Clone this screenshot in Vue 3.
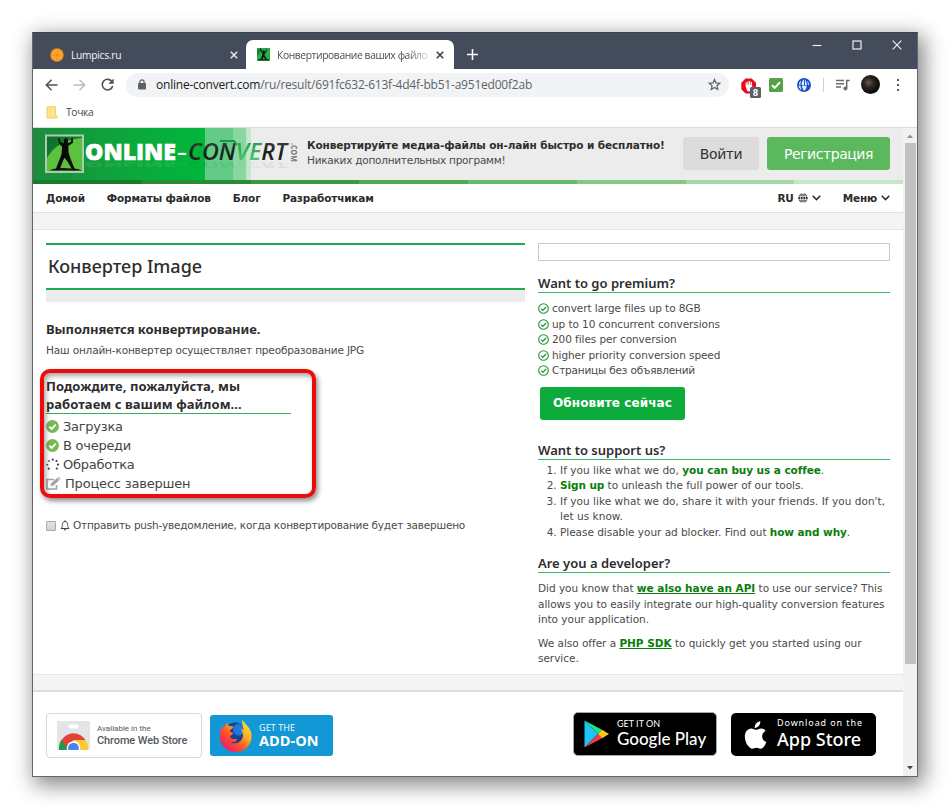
<script setup>
const navLinks = ['Домой', 'Форматы файлов', 'Блог', 'Разработчикам']

const stripColors = ['#1d7a2b', '#2b8a36', '#3b9a40', '#4fac51', '#67ba6a', '#84c787', '#a5d8a8', '#c5e7c8']

const perks = [
  { text: 'convert large files up to 8GB' },
  { text: 'up to 10 concurrent conversions' },
  { text: '200 files per conversion' },
  { text: 'higher priority conversion speed' },
  { text: 'Страницы без объявлений', ru: true }
]

const steps = [
  { label: 'Загрузка', state: 'done' },
  { label: 'В очереди', state: 'done' },
  { label: 'Обработка', state: 'busy' },
  { label: 'Процесс завершен', state: 'todo' }
]

// dots of the loading spinner
const dots = [
  { x: 7, y: 1.4, o: 1 },
  { x: 10.9, y: 2.8, o: 1 },
  { x: 12.4, y: 6.6, o: 1 },
  { x: 11.2, y: 10.6, o: 1 },
  { x: 2.8, y: 10.8, o: 0.9 },
  { x: 1.3, y: 6.8, o: 0.8 },
  { x: 3, y: 2.8, o: 0.7 }
]
</script>

<template>
  <div class="desktop">
    <div class="window">
      <!-- title bar with tabs -->
      <div class="titlebar">
        <div class="tab tab-idle">
          <svg class="fav" width="14" height="14" viewBox="0 0 14 14">
            <circle cx="7" cy="7" r="6.7" fill="#f7931e" />
            <circle cx="7" cy="7" r="5" fill="#fbab3c" />
            <path d="M7 2v10M2 7h10M3.5 3.5l7 7M10.5 3.5l-7 7" stroke="#f18a17" stroke-width=".9" />
          </svg>
          <span class="tab-title">Lumpics.ru</span>
          <svg width="8" height="8" viewBox="0 0 8 8"><path d="M.8.8l6.4 6.4M7.2.8L.8 7.2" stroke="#e6e8ec" stroke-width="1.5" /></svg>
        </div>
        <div class="tab tab-active">
          <svg class="fav" width="13" height="13" viewBox="0 0 38 38">
            <rect width="38" height="38" fill="#27b04a" />
            <path d="M0 26Q8 12 16 4H0z" fill="#148435" />
            <path d="M11 1l3 8 4 3c-1-3 0-6 2-6s3 3 2 6l4-3V2h2v9l-5 4-1 7 8 12h-4l-7-8-5 9h-5l6-12 1-8-5-5-3-8z" fill="#111" />
            <path d="M3 33h32v3H3z" fill="#111" />
          </svg>
          <span class="tab-title faded">Конвертирование ваших файло</span>
          <svg width="8" height="8" viewBox="0 0 8 8"><path d="M.8.8l6.4 6.4M7.2.8L.8 7.2" stroke="#3c4043" stroke-width="1.6" /></svg>
        </div>
        <svg class="new-tab" width="11" height="11" viewBox="0 0 11 11"><path d="M5.5 0v11M0 5.5h11" stroke="#fff" stroke-width="1.6" /></svg>
        <div class="win-buttons">
          <svg width="10" height="10" viewBox="0 0 10 10"><path d="M.5 5.5h9" stroke="#eef0f3" stroke-width="1.1" /></svg>
          <svg width="10" height="10" viewBox="0 0 10 10"><rect x="1" y="1" width="8" height="8" fill="none" stroke="#eef0f3" stroke-width="1.2" /></svg>
          <svg width="10" height="10" viewBox="0 0 10 10"><path d="M.7.7l8.6 8.6M9.3.7L.7 9.3" stroke="#eef0f3" stroke-width="1.2" /></svg>
        </div>
      </div>

      <!-- address bar -->
      <div class="toolbar">
        <svg class="nav-ic" width="13" height="12" viewBox="0 0 13 12"><path d="M12.5 6H1.4M6.6.8L1.3 6l5.3 5.2" fill="none" stroke="#4d5156" stroke-width="1.5" /></svg>
        <svg class="nav-ic" width="13" height="12" viewBox="0 0 13 12"><path d="M.5 6h11.1M6.4.8L11.7 6l-5.3 5.2" fill="none" stroke="#b9bbbe" stroke-width="1.5" /></svg>
        <svg class="nav-ic" width="13" height="13" viewBox="0 0 13 13">
          <path d="M11.2 4A5.3 5.3 0 1 0 11.7 8" fill="none" stroke="#4d5156" stroke-width="1.6" />
          <path d="M12.6.5v5.2H7.4z" fill="#4d5156" />
        </svg>
        <div class="omnibox">
          <svg width="8" height="11" viewBox="0 0 8 11">
            <rect x="0" y="4" width="8" height="6.6" rx=".8" fill="#5f6368" />
            <path d="M1.9 4.3V2.9a2.1 2.1 0 0 1 4.2 0v1.4" fill="none" stroke="#5f6368" stroke-width="1.2" />
          </svg>
          <span class="url"><b>online-convert.com</b>/ru/result/691fc632-613f-4d4f-bb51-a951ed00f2ab</span>
          <svg class="star" width="13" height="13" viewBox="0 0 24 24"><path d="M12 2.6l2.7 6.5 7 .6-5.3 4.6 1.6 6.9-6-3.7-6 3.7 1.6-6.9-5.3-4.6 7-.6z" fill="none" stroke="#5f6368" stroke-width="2.2" /></svg>
        </div>
        <div class="extensions">
          <svg width="20" height="20" viewBox="0 0 20 20">
            <path d="M4.5.5h6.2L15 4.8v6.4l-4.3 4.3H4.5L.3 11.2V4.8z" fill="#e3101c" />
            <path d="M4.6 8.5v-4h1.200V7h.5V3.400h1.200V7h.5V3h1.200v4h.5V4h1.200v5l1-.6.7.7-2.600 4.100H6.400z" fill="#fff" />
            <rect x="9" y="9" width="11" height="11" rx="1.5" fill="#5b5e62" />
            <text x="14.5" y="17.5" text-anchor="middle" class="ext-count">8</text>
          </svg>
          <svg width="14" height="14" viewBox="0 0 14 14">
            <rect width="14" height="14" rx="1.5" fill="#55a346" />
            <path d="M3 7.2l2.7 2.7L11 4.2" fill="none" stroke="#fff" stroke-width="2" />
          </svg>
          <svg width="14" height="14" viewBox="0 0 14 14">
            <circle cx="7" cy="7" r="7" fill="#1d4fc4" />
            <path d="M7 1.200C5.500 2.500 4.500 4.500 4.600 7H7.100zM8 1.500v5.500h1.900C9.700 4.500 9 2.600 8 1.500zM1.500 7.800c.2 1.700 1.400 3.400 2.900 4.200-.5-1.200-.8-2.500-.8-4.200zM4.900 7.800h4.800c-.1 2-1 3.900-2.400 5-1.300-1.100-2.200-3-2.400-5zM2 6.800c0-1.700.8-3.200 2.200-4.200-.6 1.400-.8 2.700-.8 4.200zM12.200 6.800c-.2-1.500-.9-2.900-2.100-3.900.5 1.200.8 2.400.8 3.900z" fill="#dff1ff" />
          </svg>
          <span class="sep"></span>
          <svg width="14" height="12" viewBox="0 0 14 12">
            <path d="M0 1.5h8M0 4.7h8M0 7.9h5" stroke="#6a6d72" stroke-width="1.5" />
            <path d="M10.7 9.3V1.4h3" fill="none" stroke="#6a6d72" stroke-width="1.5" />
            <circle cx="9.4" cy="9.4" r="2" fill="#6a6d72" />
          </svg>
          <span class="avatar"></span>
          <span class="kebab"><i></i><i></i><i></i></span>
        </div>
      </div>

      <div class="bookmarks">
        <svg width="12" height="13" viewBox="0 0 12 13">
          <path d="M1 .7h8.6v8.6l1.6 1V12H1z" fill="#fde48c" stroke="#eccb62" stroke-width=".9" />
        </svg>
        <span>Точка</span>
      </div>

      <!-- page and its scrollbar -->
      <div class="viewport">
        <div class="page">
          <header class="banner">
            <svg class="logo" width="270" height="52" viewBox="0 0 270 52">
              <defs>
                <linearGradient id="dark" x1="0" y1="0" x2="0" y2="1">
                  <stop offset="0" stop-color="#4a4f4b" />
                  <stop offset=".6" stop-color="#151c17" />
                  <stop offset="1" stop-color="#2b332d" />
                </linearGradient>
                <linearGradient id="leaf" x1="0" y1="0" x2="0" y2="1">
                  <stop offset="0" stop-color="#16913a" />
                  <stop offset="1" stop-color="#58cf7c" />
                </linearGradient>
                <linearGradient id="tile" x1="0" y1="0" x2="1" y2="1">
                  <stop offset="0" stop-color="#0f6d2b" />
                  <stop offset="1" stop-color="#158d35" />
                </linearGradient>
              </defs>
              <rect x="13" y="7.5" width="37" height="36.5" fill="url(#tile)" stroke="#a9ccb0" stroke-width="2" />
              <path d="M14 30Q24 12 49 10V43H14z" fill="#5cc23e" />
              <!-- figure with raised arms -->
              <path d="M25 10.500l1-.8 1.400 4.300 3.800 1.300c-.9-2.200-.2-5 1.800-5s2.700 2.600 1.700 4.900l3.300-1.500.4-3.800 1.300-.2.3 5-4.700 3.200.3 6.600 1.800 6 4 9.800 2.600 1.900h-4.500l-5-8.700-3-3.700-2 4.200-3 8.200h-4.200l3-7.500 3.200-8.400.600-7.500-2.900-3z" fill="#080a08" />
              <path d="M16 42.500l5-1.700 9-.8 15 1 4 1.500z" fill="#0c120c" />
              <g id="wordmark">
                <text x="52" y="32" class="l-online" textLength="91" lengthAdjust="spacingAndGlyphs">ONLINE</text>
                <text x="144" y="32" class="l-dash" textLength="10" lengthAdjust="spacingAndGlyphs">-</text>
                <text x="155" y="32" class="l-conv" textLength="99" lengthAdjust="spacingAndGlyphs" fill="url(#dark)">CON<tspan fill="url(#leaf)">VE</tspan>RT</text>
              </g>
              <path d="M187 13h14l3 4" fill="none" stroke="#119a3e" stroke-width="1.8" />
              <use href="#wordmark" opacity=".07" transform="matrix(1 0 0 -.35 0 45.5)" />
              <text transform="translate(257.500 15) rotate(90)" class="l-com" textLength="19" lengthAdjust="spacingAndGlyphs">.COM</text>
            </svg>
            <div class="slogan">
              <strong>Конвертируйте медиа-файлы он-лайн быстро и бесплатно!</strong>
              <span>Никаких дополнительных программ!</span>
            </div>
            <div class="auth">
              <a class="btn btn-login">Войти</a>
              <a class="btn btn-signup">Регистрация</a>
            </div>
          </header>
          <div class="strip">
            <i v-for="c in stripColors" :key="c" :style="{ background: c }"></i>
          </div>

          <nav class="menu">
            <a v-for="l in navLinks" :key="l">{{ l }}</a>
            <a class="lang">RU
              <svg width="10" height="10" viewBox="0 0 11 11">
                <circle cx="5.5" cy="5.5" r="5.2" fill="#2b2b2b" />
                <path d="M0 3.7h11M0 7.3h11M5.5 0v11" stroke="#fff" stroke-width=".8" />
                <ellipse cx="5.5" cy="5.5" rx="2.7" ry="5" fill="none" stroke="#fff" stroke-width=".8" />
              </svg>
              <svg width="9" height="6" viewBox="0 0 9 6"><path d="M.7.8l3.8 3.8L8.3.8" fill="none" stroke="#2b2b2b" stroke-width="1.5" /></svg>
            </a>
            <a class="more">Меню
              <svg width="9" height="6" viewBox="0 0 9 6"><path d="M.7.8l3.8 3.8L8.3.8" fill="none" stroke="#2b2b2b" stroke-width="1.5" /></svg>
            </a>
          </nav>
          <div class="band"></div>

          <main class="content">
            <section class="left">
              <h1>Конвертер Image</h1>
              <div class="bar"></div>
              <h2 class="converting">Выполняется конвертирование.</h2>
              <p class="info">Наш онлайн-конвертер осуществляет преобразование JPG</p>

              <div class="progress">
                <h2>Подождите, пожалуйста, мы<br />работаем с вашим файлом...</h2>
                <ul>
                  <li v-for="s in steps" :key="s.label" :class="s.state">
                    <svg v-if="s.state === 'done'" width="13" height="13" viewBox="0 0 13 13">
                      <circle cx="6.5" cy="6.5" r="6.5" fill="#79b956" />
                      <path d="M3.3 6.6l2.3 2.3 4.2-4.3" fill="none" stroke="#fff" stroke-width="1.8" />
                    </svg>
                    <svg v-else-if="s.state === 'busy'" width="13" height="13" viewBox="0 0 13.5 13">
                      <circle v-for="(d, i) in dots" :key="i" :cx="d.x" :cy="d.y" r="1.1" fill="#333" :opacity="d.o" />
                    </svg>
                    <svg v-else width="15" height="13" viewBox="0 0 15 13">
                      <path d="M8 2.5H1V12h9.500V8" fill="none" stroke="#a3a3a3" stroke-width="1.6" />
                      <path d="M4.500 9.300l.7-3L11 .9l2.400 2.200-5.800 5.500z" fill="#a3a3a3" />
                      <path d="M11.600.4l1-.4 2 1.900-.6.900z" fill="#a3a3a3" />
                    </svg>
                    <span>{{ s.label }}</span>
                  </li>
                </ul>
                <div class="highlight"></div>
              </div>

              <label class="push">
                <span class="check"></span>
                <svg width="10" height="11" viewBox="0 0 10 11">
                  <path d="M1 8.500C2.300 7.500 2.300 6 2.400 4.400 2.500 2.600 3.600 1.500 5 1.500s2.500 1.100 2.600 2.900C7.700 6 7.700 7.500 9 8.500z" fill="none" stroke="#444" stroke-width="1" />
                  <path d="M5 .3v1.2M4 9.2q1 1.500 2 0" fill="none" stroke="#444" stroke-width="1.1" />
                </svg>
                <span class="push-text">Отправить push-уведомление, когда конвертирование будет завершено</span>
              </label>
            </section>

            <aside class="right">
              <div class="ad"></div>
              <h3>Want to go premium?</h3>
              <ul class="perks">
                <li v-for="p in perks" :key="p.text" :class="{ ru: p.ru }">
                  <svg width="11" height="11" viewBox="0 0 11 11">
                    <circle cx="5.5" cy="5.5" r="4.8" fill="none" stroke="#1f9635" stroke-width="1.1" />
                    <path d="M3 5.6l1.8 1.8L8.1 4" fill="none" stroke="#1f9635" stroke-width="1.3" />
                  </svg>
                  <span>{{ p.text }}</span>
                </li>
              </ul>
              <a class="upgrade">Обновите сейчас</a>

              <h3>Want to support us?</h3>
              <ol>
                <li>If you like what we do, <a>you can buy us a coffee</a>.</li>
                <li class="tight"><a>Sign up</a> to unleash the full power of our tools.</li>
                <li>If you like what we do, share it with your friends. If you don't,<br />let us know.</li>
                <li class="tight">Please disable your ad blocker. Find out <a>how and why</a>.</li>
              </ol>

              <h3>Are you a developer?</h3>
              <p>Did you know that <a>we also have an API</a> to use our service? This<br />allows you to easily integrate our high-quality conversion features<br />into your application.</p>
              <p>We also offer a <a>PHP SDK</a> to quickly get you started using our<br />service.</p>
            </aside>
          </main>

          <div class="band band-bottom"></div>
          <footer class="stores">
            <a class="store chrome">
              <svg width="33" height="29" viewBox="0 0 33 29">
                <rect width="33" height="29" fill="#e3e4e5" />
                <rect x="11.5" y="3.5" width="10" height="4" rx="2" fill="#fff" />
                <path d="M2 29a14.500 14.500 0 0 1 3-10.800L12 29z" fill="#1a9c50" />
                <path d="M4.300 19.300A14.200 14.200 0 0 1 28.700 19.300H16.500L10 27z" fill="#de4437" />
                <path d="M16.500 19.300h12.200A14 14 0 0 1 31 29H20z" fill="#fdc931" />
                <circle cx="16.5" cy="27" r="6.8" fill="#fff" />
                <circle cx="16.5" cy="27" r="5.3" fill="#4384f3" />
              </svg>
              <span class="two"><small>Available in the</small><b>Chrome Web Store</b></span>
            </a>
            <a class="store firefox">
              <svg width="33" height="34" viewBox="0 0 33 34">
                <defs>
                  <linearGradient id="fox" x1="1" y1="0" x2=".1" y2="1">
                    <stop offset="0" stop-color="#fff04a" />
                    <stop offset=".35" stop-color="#ffb520" />
                    <stop offset=".65" stop-color="#ff4a2b" />
                    <stop offset="1" stop-color="#e0128a" />
                  </linearGradient>
                </defs>
                <circle cx="16.5" cy="16" r="12.5" fill="#1c3f97" />
                <circle cx="20" cy="10.5" r="6" fill="#1f78d8" />
                <path d="M23.500.5c1 3 5 5.500 7.500 10 3 6 1.500 13.500-3 18-5.500 5.500-15.500 6.200-21.500 1C1 25 0 18.500 1.300 13c.4-2.200 1-4 2.500-6l.7 2.700C5.500 8 6 6 8.300 3.500c.2 1.700.7 2.800 2.200 3.600 1.500.1 2.700.3 4 1-1 2.200-3.400 2.600-3.900 4.300l3.700 1.600c-.4 1.800-3 2.300-3.300 4.300 1.800 2.700 5 1.400 7.300 2.200-1.800 3.200-4.500 2.700-6.800 2.200 5 3.800 12.300 0 12.500-6.200 0-2.600-.6-4.600-2.500-6.600 1.200 0 2.200.6 3 1.500C24.500 7.500 22.500 5 23.500.5z" fill="url(#fox)" />
              </svg>
              <span class="two"><small>GET THE</small><b>ADD-ON</b></span>
            </a>
            <a class="store google">
              <svg width="25" height="28" viewBox="0 0 25 28">
                <path d="M.5.500L14 14 .5 27.500z" fill="#1cc5f5" />
                <path d="M.5.500L18 9.800 14 14z" fill="#1ce588" />
                <path d="M.5 27.500L18 18.200 14 14z" fill="#f03a4e" />
                <path d="M18 9.800l7 4.200-7 4.200L14 14z" fill="#ffc916" />
              </svg>
              <span class="two"><small>GET IT ON</small><b>Google Play</b></span>
            </a>
            <a class="store apple">
              <svg width="23" height="28" viewBox="0 0 23 28">
                <path d="M16.300.3c.2 2-.6 3.600-1.600 4.800-1.100 1.200-2.500 1.900-4 1.800-.2-1.800.6-3.500 1.600-4.600C13.400 1.100 15 .4 16.300.3z" fill="#fff" />
                <path d="M21.600 9.800c-2.400 1.500-3.500 3.400-3.400 5.600.1 2.700 1.600 4.500 4.200 5.600-.7 2.100-1.800 4-3.200 5.600-2.300 2.400-4 .3-6.600.1-2.500-.1-4 2-6.300.4C2.700 24.200.8 20 .8 15.500.9 10.500 3.900 7.700 7.200 7.500c2.100 0 3.600 1.300 4.900 1.300 1.400 0 3-1.500 5.200-1.400 1.800.1 3.300.9 4.300 2.400z" fill="#fff" />
              </svg>
              <span class="two"><small>Download on the</small><b>App Store</b></span>
            </a>
          </footer>
        </div>

        <div class="scrollbar">
          <svg width="6" height="4" viewBox="0 0 6 4"><path d="M0 4l3-3.5L6 4z" fill="#8f8f8f" /></svg>
          <div class="thumb"></div>
          <svg class="down" width="6" height="4" viewBox="0 0 6 4"><path d="M0 0l3 3.5L6 0z" fill="#444" /></svg>
        </div>
      </div>
    </div>
  </div>
</template>

<style>
body {
  background: #fff;
}
</style>

<style scoped>
* {
  box-sizing: border-box;
}

svg {
  display: block;
  flex-shrink: 0;
}

.desktop {
  height: 809px;
  padding: 32px;
  overflow: hidden;
  background: #fff;
  font-family: "DejaVu Sans", Verdana, sans-serif;
}

.window {
  display: flex;
  flex-direction: column;
  width: 886px;
  height: 745px;
  border: 1px solid #63666b;
  border-top-color: #3b4250;
  background: #fff;
  box-shadow: 4px 6px 20px 2px rgba(0, 0, 0, 0.48);
}

/* ---- browser chrome ---- */
.titlebar {
  display: flex;
  height: 36px;
  flex-shrink: 0;
  background: #444b5b;
  font-family: "Open Sans", sans-serif;
}

.tab {
  display: flex;
  align-items: center;
  height: 29px;
  margin-top: 7px;
}

.tab-idle {
  width: 213px;
  padding: 0 8px 0 17px;
  color: #f3f4f6;
}

.tab-active {
  width: 208px;
  padding: 0 10px 0 11px;
  border-radius: 7px 7px 0 0;
  background: #fff;
  color: #4a4d52;
}

.tab-title {
  flex: 1;
  margin-left: 7px;
  font-size: 10.3px;
  letter-spacing: -0.3px;
  white-space: nowrap;
}

.faded {
  letter-spacing: -0.4px;
  mask-image: linear-gradient(90deg, #000 82%, rgba(0, 0, 0, 0.25) 94%);
}

.new-tab {
  margin: 16px 0 0 13px;
}

.win-buttons {
  display: flex;
  gap: 30px;
  margin: 7px 15px 0 auto;
}

.toolbar {
  display: flex;
  align-items: center;
  height: 32px;
  flex-shrink: 0;
  padding: 0 0 1px 12px;
}

.nav-ic {
  margin-right: 15px;
}

.nav-ic:nth-child(3) {
  margin-right: 12px;
}

.omnibox {
  display: flex;
  align-items: center;
  width: 603px;
  height: 24px;
  padding: 0 8px 0 12px;
  border-radius: 12px;
  background: #f1f3f4;
  font-family: "Open Sans", sans-serif;
}

.url {
  margin-left: 10px;
  color: #5f6368;
  font-size: 12px;
  letter-spacing: -0.216px;
  white-space: nowrap;
}

.url b {
  color: #202124;
  font-weight: 400;
}

.star {
  margin-left: auto;
}

.extensions {
  display: flex;
  align-items: center;
  margin-left: 12px;
}

.extensions > svg:nth-child(1) {
  margin: 6px 8px 0 0;
}

.extensions > svg:nth-child(2) {
  margin-right: 14px;
}

.ext-count {
  fill: #fff;
  font: bold 8px "DejaVu Sans", sans-serif;
}

.sep {
  width: 1px;
  height: 14px;
  margin: 0 12px;
  background: #cfd1d4;
}

.avatar {
  width: 19px;
  height: 19px;
  margin-left: 11px;
  border-radius: 50%;
  background: radial-gradient(circle at 40% 40%, #6b5850 0, #2e2522 30%, #0d0b0c 65%, #1c1513 100%);
}

.kebab {
  display: flex;
  flex-direction: column;
  gap: 3px;
  margin-left: 17px;
}

.kebab i {
  width: 2px;
  height: 2px;
  background: #54575c;
}

.bookmarks {
  display: flex;
  align-items: center;
  gap: 8px;
  height: 27px;
  flex-shrink: 0;
  padding: 0 0 4px 13px;
  border-bottom: 1px solid #dcdcdc;
  color: #45484d;
  font-family: "Open Sans", sans-serif;
  font-size: 10.3px;
  letter-spacing: -0.35px;
}

/* ---- page ---- */
.viewport {
  display: flex;
  flex: 1;
  min-height: 0;
}

.page {
  width: 870px;
  overflow: hidden;
}

.banner {
  display: flex;
  height: 52px;
  background:
    linear-gradient(90deg, #1d8c3c 0, #0ca63c 90px, #00b73b 172px, #62cb86 172px, #62cb86 200px, #8bd7a2 200px, #8bd7a2 213px, #bfe6cb 213px, #c8e9d2 218px, transparent 218px),
    #ececec;
}

.l-online {
  fill: #fff;
  stroke: #fff;
  stroke-width: 0.6px;
  font: 800 22px "Open Sans", sans-serif;
}

.l-dash {
  fill: #fff;
  font: 600 22px "Open Sans", sans-serif;
}

.l-conv {
  font: italic 600 23px "Open Sans", sans-serif;
}

.l-com {
  fill: #777;
  font: 700 9px "Open Sans", sans-serif;
}

.slogan {
  display: flex;
  flex-direction: column;
  width: 376px;
  margin-left: 4px;
  padding-top: 10px;
  color: #2e2e2e;
  font-size: 10.5px;
  line-height: 15px;
  white-space: nowrap;
}

.slogan strong {
  letter-spacing: -0.11px;
}

.slogan span {
  color: #4a4a4a;
  letter-spacing: -0.25px;
}

.auth {
  display: flex;
  gap: 8px;
  padding-top: 9px;
}

.btn {
  height: 33px;
  border-radius: 3px;
  font-size: 14px;
  line-height: 34px;
  letter-spacing: -0.45px;
  text-align: center;
}

.btn-login {
  width: 76px;
  background: #dcdcdc;
  color: #333;
}

.btn-signup {
  width: 123px;
  background: #5cb85c;
  color: #fff;
}

.strip {
  display: flex;
  height: 4px;
}

.strip i {
  flex: 1;
}

.menu {
  display: flex;
  align-items: center;
  gap: 22px;
  height: 28px;
  padding: 0 13px;
  color: #2b2b2b;
  font-size: 10.5px;
  font-weight: 700;
  letter-spacing: -0.18px;
}

.menu a {
  display: flex;
  align-items: center;
}

.menu .lang {
  gap: 4px;
  margin-left: auto;
}

.menu .more {
  gap: 4px;
}

.band {
  height: 18px;
  border-top: 1px solid #dfdfdf;
  border-bottom: 1px solid #e6e6e6;
  background: #f4f4f4;
}

.content {
  display: flex;
  gap: 13px;
  height: 444px;
  padding: 13px 13px 0;
}

.left {
  width: 479px;
}

h1,
h2,
h3 {
  margin: 0;
  color: #2d2d2d;
  font-family: "Noto Sans", "Trebuchet MS", sans-serif;
}

h1 {
  height: 47px;
  padding-left: 2px;
  border-top: 2px solid #22a94d;
  border-bottom: 2px solid #22a94d;
  font-size: 18px;
  font-weight: 500;
  line-height: 42px;
}

.bar {
  height: 12px;
  background: #ececec;
}

h2 {
  font-size: 13px;
  line-height: 18px;
}

.converting {
  margin-top: 18px;
  letter-spacing: -0.06px;
}

.info {
  margin: 5px 0 0;
  color: #4a4a4a;
  font-size: 10.5px;
  letter-spacing: -0.157px;
  line-height: 15px;
}

.progress {
  position: relative;
  margin-top: 19px;
}

.progress h2 {
  width: 245px;
  border-bottom: 1px solid #34b25c;
  letter-spacing: 0.05px;
}

.progress ul {
  margin: 0;
  padding: 3px 0 0;
  list-style: none;
}

.progress li {
  display: flex;
  align-items: center;
  gap: 4px;
  height: 19px;
  color: #444;
  font-size: 13px;
  letter-spacing: -0.26px;
}

.progress .todo {
  letter-spacing: -0.19px;
}

/* red frame drawn round the progress list */
.highlight {
  position: absolute;
  top: -8px;
  left: -6px;
  width: 276px;
  height: 129px;
  border: 4px solid #ee0a0a;
  border-radius: 10px;
  box-shadow: 2px 3px 5px rgba(0, 0, 0, 0.45), inset 2px 3px 5px rgba(0, 0, 0, 0.35);
}

.push {
  display: flex;
  align-items: center;
  margin-top: 25px;
  color: #4a4a4a;
  font-size: 10.5px;
  letter-spacing: -0.21px;
  line-height: 15px;
}

.push svg {
  margin: 0 3px 0 4px;
}

.push-text {
  white-space: nowrap;
}

.check {
  width: 10px;
  height: 10px;
  border: 1px solid #a9a9a9;
  border-radius: 1px;
  background: linear-gradient(#e2e2e2, #d2d2d2);
}

.right {
  width: 352px;
  color: #4a4a4a;
  font-size: 10.5px;
  line-height: 15.5px;
}

.ad {
  height: 18px;
  margin-bottom: 14px;
  border: 1px solid #ccc;
}

h3 {
  height: 18px;
  border-bottom: 1px solid #35bb62;
  font-size: 13px;
  font-weight: 600;
  line-height: 16px;
}

.perks {
  margin: 0;
  padding: 8px 0 0;
  list-style: none;
}

.perks li {
  display: flex;
  align-items: center;
  gap: 3px;
  height: 15.5px;
  letter-spacing: -0.07px;
}

.perks .ru {
  letter-spacing: -0.19px;
}

.upgrade {
  display: block;
  width: 145px;
  height: 33px;
  margin: 8px 0 22px 2px;
  border-radius: 3px;
  background: #0cab3c;
  color: #fff;
  font-size: 12px;
  font-weight: 700;
  letter-spacing: 0.1px;
  line-height: 33px;
  text-align: center;
}

ol {
  margin: 0;
  padding: 3px 0 15px 22px;
  letter-spacing: 0.04px;
  white-space: nowrap;
}

.tight {
  letter-spacing: -0.03px;
}

.right ol a,
.right p a {
  color: #0a7d0a;
  font-weight: 700;
  letter-spacing: -0.07px;
}

.right p {
  margin: 8px 0 0;
  letter-spacing: -0.03px;
  white-space: nowrap;
}

.right p a {
  letter-spacing: 0;
  text-decoration: underline;
}

.band-bottom {
  border-top: 1px solid #e8e8e8;
  border-bottom: 2px solid #dedede;
}

/* ---- store badges ---- */
.stores {
  display: flex;
  align-items: flex-start;
  padding: 21px 27px 0 13px;
}

.store {
  display: flex;
  align-items: center;
  white-space: nowrap;
}

.two {
  display: flex;
  flex-direction: column;
}

.chrome {
  width: 156px;
  height: 45px;
  padding-left: 10px;
  border: 1px solid #d5d7da;
  border-radius: 4px;
  color: #55585d;
  font-family: Roboto, sans-serif;
}

.chrome .two {
  margin-left: 7px;
}

.chrome small {
  font-size: 8px;
  line-height: 10px;
}

.chrome b {
  font-size: 11px;
  font-weight: 500;
  letter-spacing: -0.1px;
  line-height: 13px;
}

.firefox {
  width: 123px;
  height: 41px;
  margin: 2px 0 0 8px;
  padding-left: 9px;
  border-radius: 3px;
  background: #1398d5;
  color: #fff;
  font-family: "Open Sans", sans-serif;
}

.firefox .two {
  margin: 0 0 1px 7px;
}

.firefox small {
  font-size: 9px;
  letter-spacing: 0.1px;
  line-height: 10px;
}

.firefox b {
  font-size: 14.5px;
  line-height: 15px;
}

.google,
.apple {
  height: 43px;
  border-radius: 5px;
  background: #000;
  color: #fff;
}

.google {
  width: 144px;
  height: 44px;
  margin: -1px 14px 0 auto;
  padding-left: 10px;
  border: 1px solid #a6a6a6;
  font-family: Lato, sans-serif;
}

.google .two {
  margin: 0 0 2px 8px;
}

.google small {
  font-size: 9px;
  line-height: 11px;
}

.google b {
  font-size: 17px;
  font-weight: 500;
  line-height: 19px;
}

.apple {
  width: 145px;
  padding-left: 13px;
  font-family: "Noto Sans", sans-serif;
}

.apple .two {
  margin: 0 0 1px 10px;
}

.apple small {
  font-size: 9px;
  letter-spacing: 0.9px;
  line-height: 10px;
}

.apple b {
  font-size: 18px;
  font-weight: 500;
  line-height: 22px;
}

.scrollbar {
  display: flex;
  flex-direction: column;
  align-items: center;
  width: 14px;
  padding: 6px 0;
  background: #f1f1f1;
}

.thumb {
  width: 11px;
  height: 521px;
  margin-top: 5px;
  background: #c1c1c1;
}

.down {
  margin-top: auto;
}
</style>
